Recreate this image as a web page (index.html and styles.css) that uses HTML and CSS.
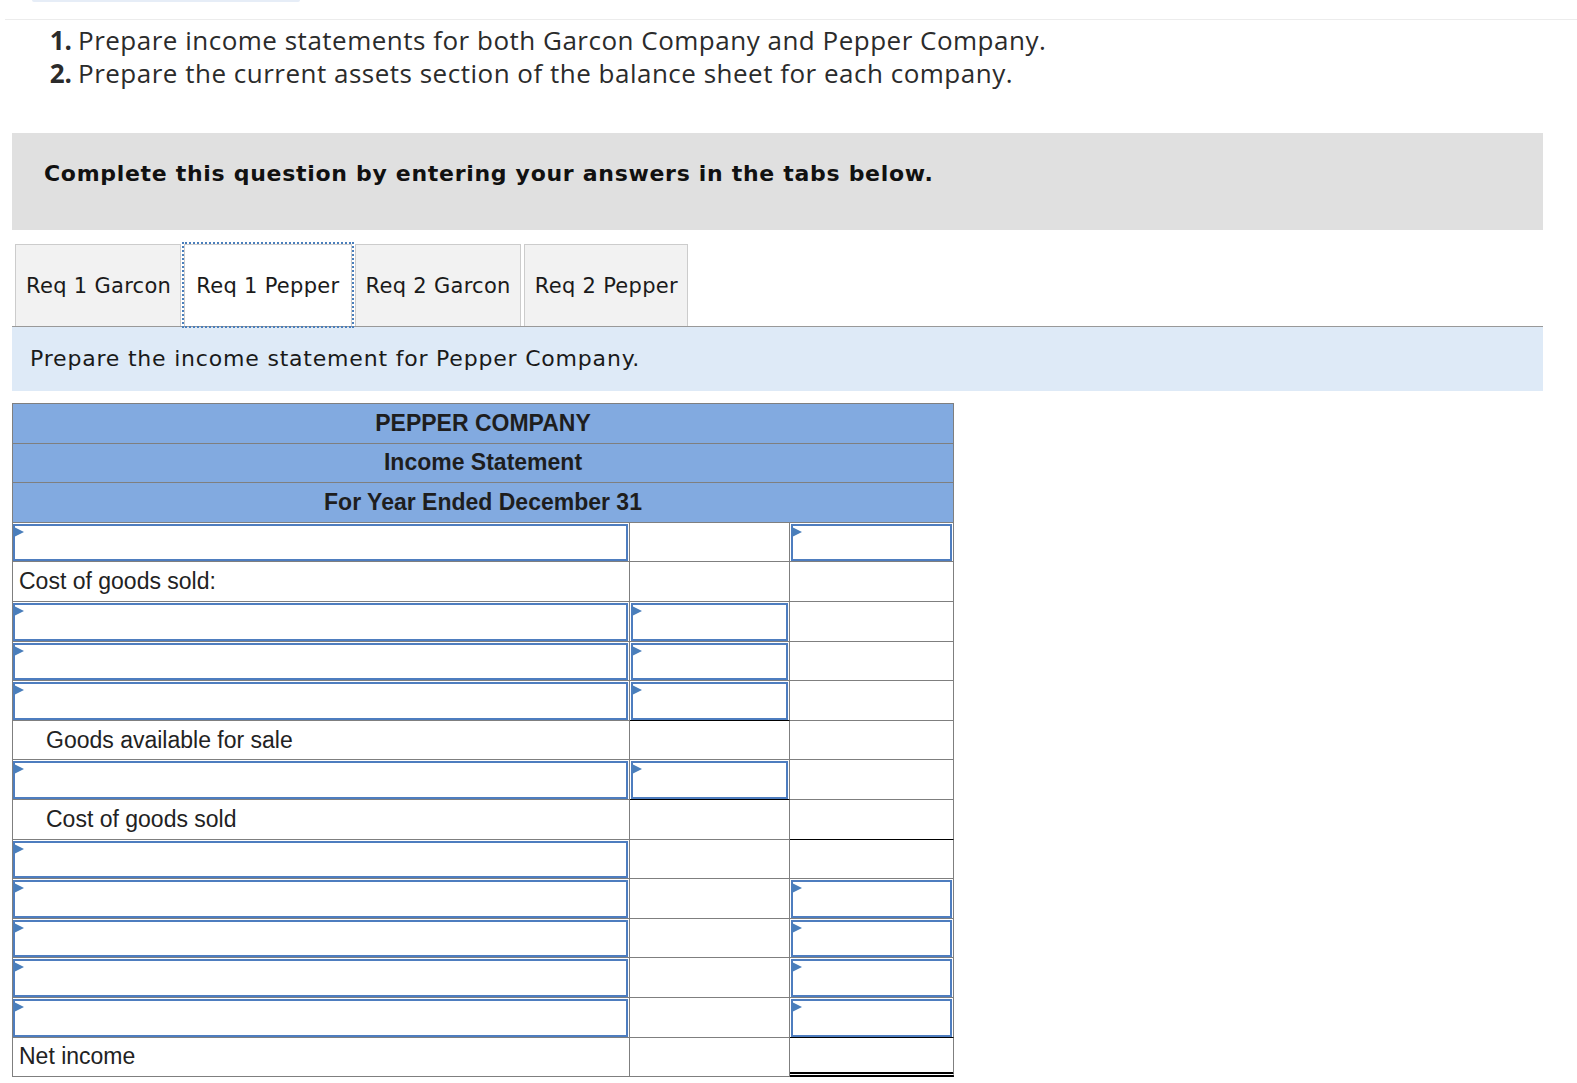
FILE: index.html
```html
<!DOCTYPE html>
<html lang="en">
<head>
<meta charset="utf-8">
<title>Pepper Company Income Statement</title>
<link rel="stylesheet" href="styles.css">
</head>
<body>
<div class="page">
  <div class="topstub"></div>
  <div class="topline"></div>
  <div class="questions">
    <div class="q"><span class="num">1.</span><span class="qt">Prepare income statements for both Garcon Company and Pepper Company.</span></div>
    <div class="q"><span class="num">2.</span><span class="qt">Prepare the current assets section of the balance sheet for each company.</span></div>
  </div>

  <div class="complete">Complete this question by entering your answers in the tabs below.</div>

  <div class="tabs">
    <div class="tab">Req 1 Garcon</div>
    <div class="tab active">Req 1 Pepper</div>
    <div class="tab">Req 2 Garcon</div>
    <div class="tab">Req 2 Pepper</div>
  </div>

  <div class="instr">Prepare the income statement for Pepper Company.</div>

  <div class="stmt">
    <div class="hd">PEPPER COMPANY</div>
    <div class="hd">Income Statement</div>
    <div class="hd">For Year Ended December 31</div>

    <div class="cell in c1"><div class="box"><i class="tri"></i></div></div><div class="cell"></div><div class="cell in"><div class="box"><i class="tri"></i></div></div>
    <div class="cell lbl">Cost of goods sold:</div><div class="cell"></div><div class="cell"></div>
    <div class="cell in c1"><div class="box"><i class="tri"></i></div></div><div class="cell in"><div class="box"><i class="tri"></i></div></div><div class="cell"></div>
    <div class="cell in c1"><div class="box"><i class="tri"></i></div></div><div class="cell in"><div class="box"><i class="tri"></i></div></div><div class="cell"></div>
    <div class="cell in c1"><div class="box"><i class="tri"></i></div></div><div class="cell in sum"><div class="box"><i class="tri"></i></div></div><div class="cell"></div>
    <div class="cell lbl ind">Goods available for sale</div><div class="cell"></div><div class="cell"></div>
    <div class="cell in c1"><div class="box"><i class="tri"></i></div></div><div class="cell in sum"><div class="box"><i class="tri"></i></div></div><div class="cell"></div>
    <div class="cell lbl ind">Cost of goods sold</div><div class="cell"></div><div class="cell sum"></div>
    <div class="cell in c1"><div class="box"><i class="tri"></i></div></div><div class="cell"></div><div class="cell"></div>
    <div class="cell in c1"><div class="box"><i class="tri"></i></div></div><div class="cell"></div><div class="cell in"><div class="box"><i class="tri"></i></div></div>
    <div class="cell in c1"><div class="box"><i class="tri"></i></div></div><div class="cell"></div><div class="cell in"><div class="box"><i class="tri"></i></div></div>
    <div class="cell in c1"><div class="box"><i class="tri"></i></div></div><div class="cell"></div><div class="cell in"><div class="box"><i class="tri"></i></div></div>
    <div class="cell in c1"><div class="box"><i class="tri"></i></div></div><div class="cell"></div><div class="cell in sum"><div class="box"><i class="tri"></i></div></div>
    <div class="cell lbl">Net income</div><div class="cell"></div><div class="cell dbl"></div>
  </div>
</div>
</body>
</html>
```

FILE: styles.css
```css
html, body {
  margin: 0;
  padding: 0;
  background: #ffffff;
}

.page {
  width: 1577px;
}

.topstub {
  margin-left: 32px;
  width: 268px;
  height: 2px;
  background: #e6edf7;
  border-radius: 0 0 3px 3px;
}

.topline {
  margin: 17px 0 0 5px;
  border-top: 1px solid #ececec;
}

.questions {
  padding-top: 4px;
  font-family: "Open Sans", "Lato", sans-serif;
  font-size: 26px;
  letter-spacing: 0.5px;
  line-height: 33px;
  color: #2b2b2b;
}

.q {
  display: flex;
  white-space: nowrap;
}

.num {
  display: inline-block;
  width: 72px;
  text-align: right;
  font-weight: 700;
  letter-spacing: 0;
  margin-right: 6px;
}

.complete {
  margin: 43px 0 0 12px;
  width: 1531px;
  box-sizing: border-box;
  height: 97px;
  padding: 26px 32px 0 32px;
  background: #e0e0e0;
  font-family: "DejaVu Sans", Verdana, sans-serif;
  font-weight: 700;
  font-size: 22px;
  letter-spacing: 0.7px;
  line-height: 30px;
  color: #111;
  white-space: nowrap;
}

.tabs {
  margin: 14px 0 0 12px;
  width: 1531px;
  display: flex;
  gap: 3px;
  padding-left: 3px;
  box-sizing: border-box;
  border-bottom: 1px solid #999999;
}

.tab {
  height: 82px;
  box-sizing: border-box;
  padding: 0 9px 0 10px;
  display: flex;
  align-items: center;
  background: #f2f2f2;
  border: 1px solid #cccccc;
  border-bottom: none;
  font-family: "DejaVu Sans", Verdana, sans-serif;
  font-size: 21px;
  letter-spacing: 0.3px;
  color: #1a1a1a;
  white-space: nowrap;
}

.tab.active {
  background: #ffffff;
  padding: 0 11px;
  outline: 2px dotted #4a7ebb;
  outline-offset: 0;
}

.instr {
  margin-left: 12px;
  width: 1531px;
  height: 64px;
  box-sizing: border-box;
  padding: 17px 0 0 18px;
  background: #deeaf7;
  font-family: "DejaVu Sans", Verdana, sans-serif;
  font-size: 22px;
  letter-spacing: 0.8px;
  line-height: 30px;
  color: #1a1a1a;
  white-space: nowrap;
}

.stmt {
  margin: 12px 0 0 12px;
  width: 942px;
  box-sizing: border-box;
  display: grid;
  grid-template-columns: 617px 160px 164px;
  grid-auto-rows: 39.6px;
  border-top: 1px solid #7f7f7f;
  border-left: 1px solid #7f7f7f;
  font-family: "Liberation Sans", Arial, sans-serif;
  font-size: 23px;
  color: #222222;
}

.hd {
  grid-column: 1 / span 3;
  display: flex;
  align-items: center;
  justify-content: center;
  background: #82aae0;
  border-right: 1px solid #7f7f7f;
  border-bottom: 1px solid #7f7f7f;
  font-weight: 700;
  color: #1e1e1e;
  box-sizing: border-box;
}

.cell {
  box-sizing: border-box;
  border-right: 1px solid #7f7f7f;
  border-bottom: 1px solid #7f7f7f;
  display: flex;
  align-items: center;
}

.lbl {
  padding-left: 6px;
  white-space: nowrap;
}

.lbl.ind {
  padding-left: 33px;
}

.cell.in {
  align-items: stretch;
  padding: 1px 1px 0 1px;
}

.cell.in.c1 {
  padding-left: 0;
}

.box {
  position: relative;
  flex: 1;
  border: 2px solid #4e7dbf;
  background: #ffffff;
}

.tri {
  position: absolute;
  left: -1px;
  top: 1px;
  width: 0;
  height: 0;
  border-left: 10px solid #4a7ebb;
  border-top: 5px solid transparent;
  border-bottom: 5px solid transparent;
}

.cell.sum {
  border-bottom-color: #000000;
}

.cell.dbl {
  border-bottom: 5px double #000000;
}
```
